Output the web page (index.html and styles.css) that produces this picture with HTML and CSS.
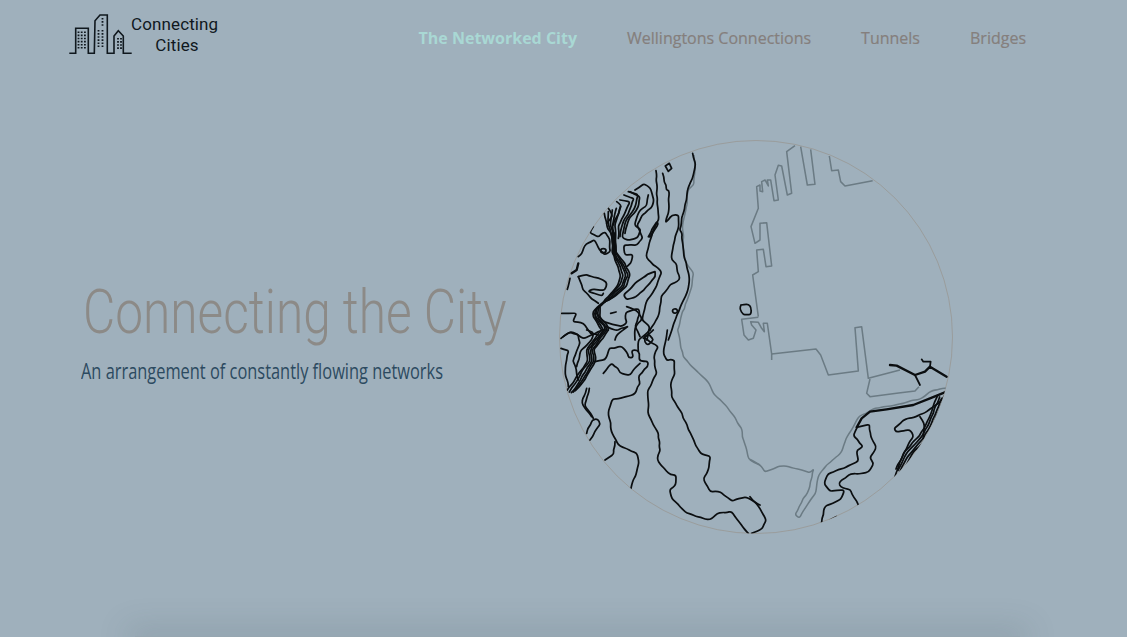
FILE: index.html
```html
<!DOCTYPE html>
<html lang="en">
<head>
<meta charset="utf-8">
<title>Connecting Cities</title>
<link rel="stylesheet" href="styles.css">
</head>
<body>
<div class="page">
  <header class="topbar">
    <a class="brand" href="#">
      <svg class="brand-mark" viewBox="65 10 70 50" width="70" height="50" aria-hidden="true">
        <path class="mark-line" d="M69.3 53.3H75.7V28.3H88.3V53.3H94.3L95 20.7L100 15H107.3V53.3H114V36L118.3 30.7L123.3 36V53.3H131.7"/>
        <path class="mark-dots" d="M78.5 31.5V50M81.7 31.5V50M84.9 31.5V50M98.5 30V48M102.5 30V48M118 38V50M121 38V50M102.5 18V27"/>
      </svg>
      <span class="brand-name">Connecting<br><span class="brand-line2">Cities</span></span>
    </a>
    <nav class="nav">
      <a class="nav-link is-active" href="#">The Networked City</a>
      <a class="nav-link" href="#">Wellingtons Connections</a>
      <a class="nav-link" href="#">Tunnels</a>
      <a class="nav-link" href="#">Bridges</a>
    </nav>
  </header>
  <main class="hero">
    <div class="hero-text">
      <h1 class="hero-title">Connecting the City</h1>
      <p class="hero-sub">An arrangement of constantly flowing networks</p>
    </div>
    <svg class="map" viewBox="559 140 394 394" width="394" height="394" aria-hidden="true">
      <defs>
        <clipPath id="disc"><circle cx="756" cy="337" r="196.5"/></clipPath>
      </defs>
      <circle class="rim" cx="756" cy="337" r="196.5"/>
      <g clip-path="url(#disc)">
        <g class="grey" transform="translate(750 130) scale(.3333)">
          <path d="M135 47L110 65L125 190L112 195L95 108L85 106L75 135L85 210L72 212L62 150L52 150L55 168L45 150L35 155L38 185L30 183L30 165L20 170L25 235L3 290L15 340L30 330L30 280L50 278L65 408L48 410L40 358L20 360L25 425L8 435L25 560"/>
          <path d="M152 50L172 165L195 163L182 58"/>
          <path d="M238 78L245 122L265 120L272 155L285 168L368 152"/>
        </g>
        <g class="grey" transform="translate(730 280) scale(.3333)">
          <path d="M85 112L35 118L42 165L55 180L70 175L78 150L65 135L62 125L85 127L95 145L103 155L100 130L112 130L125 222L258 207L272 225L295 285L385 273L375 143L395 140L415 295L510 270"/>
          <path d="M125 222V240"/>
        </g>
        <g class="grey" transform="translate(750 330) scale(.3333)">
          <path d="M360 147L350 190L360 200L440 190L495 183L507 170"/>
          <path class="wavy" d="M0 390L30 405L45 425L95 407L150 418L180 428L190 415L180 470L135 555L148 563L195 490L205 435L240 395L270 375L295 310L330 260L375 235L430 225L510 207L550 180L590 175"/>
        </g>
        <g class="grey" transform="translate(550 330) scale(.3333)">
          <path class="wavy" d="M383 0L390 40L400 80L430 115L470 150L490 190L530 230L555 265L575 295L580 330L595 385L630 405"/>
        </g>
        <g class="grey" transform="translate(550 130) scale(.3333)">
          <path class="wavy" d="M432 75L437 120L430 165L415 175L410 230L398 290L400 350L407 395L430 430L425 470L410 510L390 570L383 600"/>
        </g>
        <g class="ink" transform="translate(550 130) scale(.3333)">
          <path class="wavy" d="M428 70L435 100L430 135L415 170L408 210L400 250L390 300L395 310L400 370L410 410L420 450L415 480L395 520L370 580L355 630"/>
          <path class="wavy" d="M338 130L350 180L355 180L358 240L348 278L365 255L385 255L385 290L370 345L365 390L380 400L388 450L360 465L335 500L325 560L305 590L300 600"/>
          <path class="wavy" d="M255 180L280 160L300 175L310 210L305 235L275 255L262 285L278 325L260 345L220 345L225 375L250 375L245 395L230 410"/>
          <path class="wavy" d="M235 185L265 195L255 235L230 270L215 320L235 332L262 322L270 300L252 282L270 240L290 225L295 195"/>
          <path class="wavy" d="M210 210L240 215L225 245L205 290L205 325"/>
          <path class="wavy" d="M222 195L252 205L240 240L218 280L210 320"/>
          <path class="wavy" d="M240 185L270 200L262 235L240 262L225 310"/>
          <path class="wavy" d="M175 235L188 258L170 280"/>
          <path class="wavy" d="M200 215L215 225L200 260L190 285"/>
          <path class="wavy" d="M318 122L322 220L325 265L300 330L288 385L335 425L320 470L290 510L278 570L300 590L290 630"/>
          <path class="wavy" d="M295 320L320 275L325 280L300 320Z"/>
          <path class="wavy" d="M315 425L295 430L255 460L222 495L228 508L250 505L290 470L318 440Z"/>
          <path class="wavy" d="M130 290L120 310L145 320L165 305L180 330L180 365L165 375L148 360L135 330L110 340L95 370L85 380"/>
          <path d="M152 362A8 6 0 1 0 168 362A8 6 0 1 0 152 362Z"/>
          <path class="thick" d="M85 400L80 420L65 430"/>
          <path class="wavy" d="M60 445L52 478"/>
          <path class="wavy" d="M85 440L105 435L160 450L170 460L165 480L125 477L115 485L155 497L160 490"/>
          <path class="wavy" d="M85 440L100 480L125 505L145 520"/>
          <path class="wavy" d="M35 550L80 550L70 575L100 580L125 615L160 600"/>
          <path class="wavy" d="M40 620L65 605L100 625L130 610L145 615"/>
          <path class="wavy" d="M140 550L160 575L215 590L230 580L225 550L265 535L270 550L255 590L270 620"/>
          <path class="wavy" d="M230 530L260 540L275 570L255 590L255 630"/>
          <path d="M182 550L198 546"/>
          <path d="M368 545A7 6 0 1 0 382 541A7 6 0 1 0 368 545Z"/>
          <path class="wavy" d="M170 590L200 600L235 590L205 610L195 630"/>
          <path d="M346 108L358 100L365 115L355 124Z"/>
          <path class="wavy" d="M163 250L170 285L186 320L187 365L200 400L212 435L200 470L165 510L130 545L128 560L150 590L155 600"/>
          <path class="wavy" d="M175 245L176 285L188 320L189 365L206 400L219 435L207 470L172 507L135 540L133 560L156 590L160 600"/>
          <path class="wavy" d="M187 240L182 285L191 320L192 365L212 400L226 435L214 470L179 504L140 535L138 560L162 590L165 600"/>
          <path class="wavy" d="M199 235L188 285L193 320L194 365L218 400L233 435L221 470L186 501L145 530L143 560L168 590L170 600"/>
          <path class="wavy" d="M211 230L194 285L196 320L197 365L224 400L240 435L228 470L193 498L150 525L148 560L174 590L175 600"/>
          <path class="thick" d="M188 310L190 370M194 310L198 370"/>
          <path class="wavy" d="M280 625L310 600"/>
        </g>
        <g class="ink" transform="translate(730 280) scale(.3333)">
          <path class="wavy" d="M33 75L55 73L63 82L62 102L38 103L30 88Z"/>
        </g>
        <g class="ink" transform="translate(550 330) scale(.3333)">
          <path class="wavy" d="M33 25L60 5L85 15L90 40L70 90L85 150"/>
          <path class="wavy" d="M33 55L55 60L45 120L55 170"/>
          <path class="wavy" d="M110 0L130 10L125 30L95 60L80 110"/>
          <path class="wavy" d="M135 95L165 90L180 55L215 50L235 70L235 85L250 80L245 60L260 60L270 70L265 90L295 95L295 110L265 135L270 160L250 195L190 208L175 240L185 305L205 345L260 370L268 400L243 475"/>
          <path class="wavy" d="M160 130L185 100L205 115L210 130L240 135L270 100"/>
          <path class="wavy" d="M195 335L190 370L165 390"/>
          <path class="wavy" d="M300 0L265 30L265 65"/>
          <path class="wavy" d="M285 25L305 40L325 50L310 80L320 130L295 180L295 255L325 310L330 360L320 390L360 435L380 435L378 465L360 480L365 505L410 550L480 570L500 550L545 545L570 580L595 610"/>
          <path class="wavy" d="M285 20L295 10L310 30L295 45L285 35Z"/>
          <path class="wavy" d="M352 0L340 70L350 90L372 90L375 130L362 165L365 200L395 250L420 310L450 370L480 380L475 425L460 445L480 485L510 485L545 512L590 500L630 525"/>
          <path class="wavy" d="M120 330L150 280L145 265L125 270L110 310"/>
          <path class="wavy" d="M110 175L95 220L125 260"/>
          <path class="wavy" d="M118 175L105 225L130 265"/>
          <path class="wavy" d="M155 0L126 35L108 60L115 90L90 125L76 150L52 180"/>
          <path class="wavy" d="M160 0L132 35L114 60L121 90L97 125L83 150L58 186"/>
          <path class="wavy" d="M165 0L138 35L120 60L127 90L104 125L90 150L64 188"/>
          <path class="wavy" d="M170 0L144 35L126 60L133 90L111 125L97 150L70 186"/>
          <path class="wavy" d="M175 0L150 35L132 60L139 90L118 125L104 150L76 182"/>
        </g>
        <g class="ink" transform="translate(750 330) scale(.3333)">
          <path class="wavy" d="M0 500L30 535L50 570L35 595L5 610"/>
          <path class="thick" d="M590 185L540 205L490 225L410 238L360 245L335 265L320 292"/>
          <path class="wavy" d="M320 292L358 285L362 320L380 350L360 385L372 400L355 425L295 435L265 460L270 470L300 480L325 525"/>
          <path class="wavy" d="M320 295L312 320L340 350L320 360L325 395L280 415L235 430L222 460L240 485L285 480L270 510L225 530L215 578"/>
          <path d="M240 570L260 560"/>
          <path class="thick" d="M420 105L440 107L495 135L525 125L540 110L590 140"/>
          <path d="M495 135L510 165M540 110L542 95L520 95L515 88"/>
          <path class="wavy" d="M435 440L460 370L490 320L480 300L440 305L432 295L460 270L510 255L560 225L585 195"/>
          <path class="wavy" d="M510 260L525 285L520 325"/>
          <path class="wavy" d="M563 197L528 282L508 317L468 362L438 417"/>
          <path class="wavy" d="M569 201L534 286L514 321L474 366L444 421"/>
          <path class="wavy" d="M575 205L540 290L520 325L480 370L450 425"/>
          <path class="wavy" d="M581 209L546 294L526 329L486 374L456 429"/>
        </g>
      </g>
    </svg>
  </main>
  <div class="fold-edge"></div>
</div>
<script src="map.js"></script>
</body>
</html>
```
FILE: styles.css
```css
* { box-sizing: border-box; }
html, body { margin: 0; height: 100%; overflow: hidden; }
body { background: #9fb0bc; font-family: "Open Sans", sans-serif; }
.page { height: 637px; display: flex; flex-direction: column; overflow: hidden; }

.topbar { height: 76px; display: flex; align-items: flex-start; justify-content: space-between; padding: 10px 101px 0 65px; flex: none; }
.brand { display: flex; align-items: flex-start; text-decoration: none; color: #10181e; }
.brand-mark { display: block; flex: none; }
.brand-name { margin: 4px 0 0 -4px; width: 87px; text-align: center; font: 400 17px/21px Roboto, sans-serif; letter-spacing: .12px; }
.brand-line2 { padding-left: 5px; }
.mark-line { fill: none; stroke: #10181e; stroke-width: 1.6; }
.mark-dots { fill: none; stroke: #10181e; stroke-width: 1.8; stroke-dasharray: 1.6 1.5; }

.nav { display: flex; gap: 50px; padding-top: 17px; }
.nav-link { font-size: 16px; line-height: 22px; font-weight: 500; color: #857f7d; -webkit-text-stroke: .2px #857f7d; text-decoration: none; white-space: nowrap; }
.nav-link.is-active { color: #a9d8d4; font-weight: 700; -webkit-text-stroke: 0; }

.hero { flex: 1; display: flex; align-items: center; justify-content: space-between; padding: 0 174px 38px 81px; }
.hero-text { flex: none; width: 440px; margin-top: -12px; }
.hero-title { margin: 0 0 0 2px; font: 300 62px/70px Roboto, sans-serif; color: #8c8a87; white-space: nowrap; transform: scaleX(.8); transform-origin: 0 50%; }
.hero-sub { margin: 8px 0 0; font-size: 22px; line-height: 30px; font-weight: 400; color: #2c4a60; white-space: nowrap; transform: scaleX(.745); transform-origin: 0 50%; }

.map { flex: none; display: block; }
.rim { fill: none; stroke: rgba(150, 140, 130, .55); stroke-width: 1; }
.grey path { fill: none; stroke: #6b7b84; stroke-width: 4.6; stroke-linejoin: round; }
.ink path { fill: none; stroke: #0b0e10; stroke-width: 5.2; stroke-linejoin: round; stroke-linecap: round; }
.ink .thick { stroke-width: 7; }

.fold-edge { flex: none; height: 1px; width: 885px; margin: 0 0 0 135px; background: #96a6b0; box-shadow: 0 0 30px 8px rgba(70, 85, 95, .22); }
```
FILE: map.js
```js
// Turns the traced contour polylines into wiggly, smooth map lines.
(function () {
  var seed = 7;
  function rnd() {
    seed = (seed * 16807) % 2147483647;
    return (seed / 2147483647) - 0.5;
  }
  document.querySelectorAll('path.wavy').forEach(function (path) {
    var raw = path.getAttribute('d');
    var closed = /Z\s*$/.test(raw);
    var nums = raw.match(/-?[\d.]+/g).map(Number);
    var pts = [];
    for (var i = 0; i < nums.length; i += 2) pts.push([nums[i], nums[i + 1]]);
    if (closed) pts.push(pts[0]);
    var dense = [pts[0]];
    for (var j = 1; j < pts.length; j++) {
      var a = pts[j - 1], b = pts[j];
      var steps = Math.max(1, Math.round(Math.hypot(b[0] - a[0], b[1] - a[1]) / 14));
      for (var s = 1; s <= steps; s++) {
        var t = s / steps, last = j === pts.length - 1 && s === steps;
        dense.push([
          a[0] + (b[0] - a[0]) * t + (last ? 0 : rnd() * 4),
          a[1] + (b[1] - a[1]) * t + (last ? 0 : rnd() * 4)
        ]);
      }
    }
    var d = 'M' + dense[0][0].toFixed(1) + ' ' + dense[0][1].toFixed(1);
    for (var k = 1; k < dense.length - 1; k++) {
      var mx = (dense[k][0] + dense[k + 1][0]) / 2, my = (dense[k][1] + dense[k + 1][1]) / 2;
      d += 'Q' + dense[k][0].toFixed(1) + ' ' + dense[k][1].toFixed(1) + ' ' + mx.toFixed(1) + ' ' + my.toFixed(1);
    }
    var end = dense[dense.length - 1];
    d += 'L' + end[0].toFixed(1) + ' ' + end[1].toFixed(1);
    path.setAttribute('d', d);
  });
})();
```
